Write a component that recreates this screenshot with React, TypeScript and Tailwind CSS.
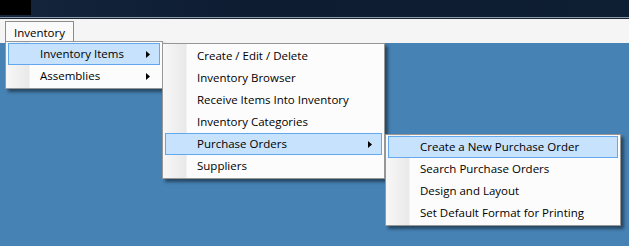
import React from 'react';

type Item = { label: string; sub?: boolean; active?: boolean };

const MAIN: Item[] = [
  { label: 'Inventory Items', sub: true, active: true },
  { label: 'Assemblies', sub: true },
];

const ITEMS: Item[] = [
  { label: 'Create / Edit / Delete' },
  { label: 'Inventory Browser' },
  { label: 'Receive Items Into Inventory' },
  { label: 'Inventory Categories' },
  { label: 'Purchase Orders', sub: true, active: true },
  { label: 'Suppliers' },
];

const ORDERS: Item[] = [
  { label: 'Create a New Purchase Order', active: true },
  { label: 'Search Purchase Orders' },
  { label: 'Design and Layout' },
  { label: 'Set Default Format for Printing' },
];

function Arrow() {
  return (
    <svg width="4" height="7" viewBox="0 0 4 7" className="shrink-0">
      <path d="M0 0 L4 3.5 L0 7 Z" fill="#000" />
    </svg>
  );
}

function MenuRow({ item }: { item: Item }) {
  return (
    <div
      className={
        'flex h-[22px] items-center ' +
        (item.active
          ? 'border border-[#62a8ee] bg-[#c6e2fc] pl-[31px] pr-[9px]'
          : 'pl-[32px] pr-[10px]')
      }
    >
      <span className="flex-1 whitespace-nowrap">{item.label}</span>
      {item.sub && <Arrow />}
    </div>
  );
}

function Menu({ items, className }: { items: Item[]; className: string }) {
  return (
    <div
      className={
        'absolute border border-[#979797] bg-[linear-gradient(to_right,#f7f7f7_0px,#e9e9e9_23px,#fcfcfc_24px)] px-[2px] py-[1px] shadow-[3px_3px_3px_rgba(0,0,0,0.45)] ' +
        className
      }
    >
      {items.map((it) => (
        <MenuRow key={it.label} item={it} />
      ))}
    </div>
  );
}

export default function App() {
  return (
    <div className="relative h-[246px] w-[629px] overflow-hidden bg-[#4682b4] font-['Segoe_UI','Open_Sans',sans-serif] text-[11.5px] leading-none text-black">
      {/* window title strip */}
      <div className="flex h-[17px] bg-[linear-gradient(to_right,#14253d,#0d1c31_40%,#0f1f33)]">
        <div className="h-[15px] w-[31px] bg-black" />
      </div>
      <div className="h-px bg-[#8d9cad]" />
      <div className="h-px bg-[#1b2230]" />

      {/* menu bar */}
      <div className="h-[24px] bg-[#f5f5f5] pl-[5px] pt-[2px]">
        <div className="flex h-[22px] w-[69px] items-center border border-b-0 border-[#8c8c8c] bg-[#fafafa] pl-[8px]">
          Inventory
        </div>
      </div>

      <Menu items={MAIN} className="left-[5px] top-[41px] w-[158px]" />
      <Menu items={ITEMS} className="left-[162px] top-[43px] w-[223px]" />
      <Menu items={ORDERS} className="left-[385px] top-[134px] w-[236px]" />
    </div>
  );
}
